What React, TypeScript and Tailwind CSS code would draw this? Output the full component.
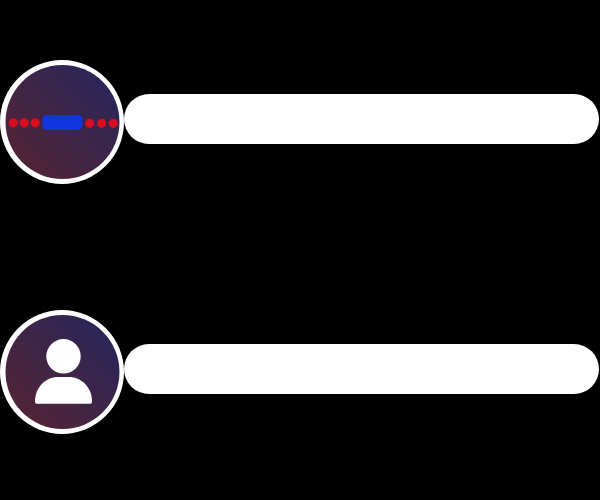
import type { ReactNode } from "react";

function Badge({ id, children }: { id: string; children: ReactNode }) {
  return (
    <svg viewBox="0 0 124 124" className="block size-[124px]" aria-hidden="true">
      <defs>
        <linearGradient id={id} x1="0.1" y1="0.9" x2="0.9" y2="0.1">
          <stop offset="0" stopColor="#522335" />
          <stop offset="0.5" stopColor="#3f2547" />
          <stop offset="1" stopColor="#292558" />
        </linearGradient>
      </defs>
      <circle cx="62" cy="62" r="62" fill="#fff" />
      <circle cx="62.5" cy="62" r="57" fill={`url(#${id})`} />
      {children}
    </svg>
  );
}

function Field({ id, label, type, icon }: { id: string; label: string; type: string; icon: ReactNode }) {
  return (
    <div className="flex items-start pt-[60px] pb-[66px] pr-px">
      <label htmlFor={id} aria-label={label} className="shrink-0">
        {icon}
      </label>
      <input
        id={id}
        type={type}
        aria-label={label}
        className="mt-[34px] h-[50px] min-w-0 flex-1 rounded-full bg-white px-6 font-['Liberation_Sans',sans-serif] text-lg text-black outline-none"
      />
    </div>
  );
}

const dots = [
  [13.3, 62.8],
  [24.2, 62.8],
  [35.2, 62.8],
  [89.6, 63.3],
  [101.7, 63.3],
  [113.3, 63.3],
];

export default function App() {
  return (
    <main className="min-h-screen bg-black">
      <Field
        id="password"
        label="Password"
        type="password"
        icon={
          <Badge id="password-fill">
            {dots.map(([x, y]) => (
              <circle key={x} cx={x} cy={y} r="4.6" fill="#d70d20" />
            ))}
            <rect x="42.5" y="55" width="40" height="15" rx="4.5" fill="#1235df" />
          </Badge>
        }
      />
      <Field
        id="username"
        label="Username"
        type="text"
        icon={
          <Badge id="username-fill">
            <circle cx="63.5" cy="46.3" r="17.2" fill="#fff" />
            <path
              d="M35 91.5C35 77 46 67 58 67H69C81 67 92 77 92 91.5Q92 93.7 90.5 93.7H36.5Q35 93.7 35 91.5Z"
              fill="#fff"
            />
          </Badge>
        }
      />
    </main>
  );
}
